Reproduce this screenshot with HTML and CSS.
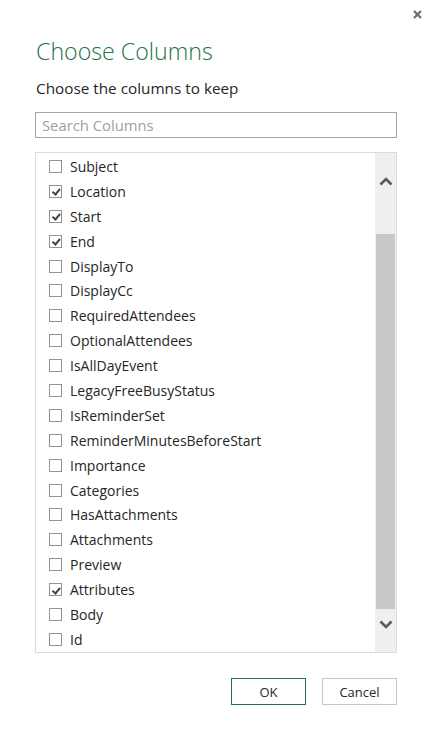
FILE: index.html
```html
<!DOCTYPE html>
<html>
<head>
<meta charset="utf-8">
<link rel="stylesheet" href="styles.css">
</head>
<body>
<div class="dialog">
  <button class="close" aria-label="Close">
    <svg width="9" height="9" viewBox="0 0 9 9"><path d="M1 1 L8 8 M8 1 L1 8" stroke="#6b6b6b" stroke-width="2.2" fill="none"/></svg>
  </button>
  <h1 class="title">Choose Columns</h1>
  <p class="subtitle">Choose the columns to keep</p>
  <div class="search"><span class="placeholder">Search Columns</span></div>
  <div class="listbox">
    <ul class="items">
      <li class="item"><span class="cb"></span>Subject</li>
      <li class="item"><span class="cb checked"></span>Location</li>
      <li class="item"><span class="cb checked"></span>Start</li>
      <li class="item"><span class="cb checked"></span>End</li>
      <li class="item"><span class="cb"></span>DisplayTo</li>
      <li class="item"><span class="cb"></span>DisplayCc</li>
      <li class="item"><span class="cb"></span>RequiredAttendees</li>
      <li class="item"><span class="cb"></span>OptionalAttendees</li>
      <li class="item"><span class="cb"></span>IsAllDayEvent</li>
      <li class="item"><span class="cb"></span>LegacyFreeBusyStatus</li>
      <li class="item"><span class="cb"></span>IsReminderSet</li>
      <li class="item"><span class="cb"></span>ReminderMinutesBeforeStart</li>
      <li class="item"><span class="cb"></span>Importance</li>
      <li class="item"><span class="cb"></span>Categories</li>
      <li class="item"><span class="cb"></span>HasAttachments</li>
      <li class="item"><span class="cb"></span>Attachments</li>
      <li class="item"><span class="cb"></span>Preview</li>
      <li class="item"><span class="cb checked"></span>Attributes</li>
      <li class="item"><span class="cb"></span>Body</li>
      <li class="item"><span class="cb"></span>Id</li>
    </ul>
    <div class="scrollbar">
      <div class="arrow up"><svg width="14" height="9" viewBox="0 0 14 9"><path d="M1.5 7.5 L7 2 L12.5 7.5" stroke="#5a5a5a" stroke-width="2.6" fill="none"/></svg></div>
      <div class="track"><div class="thumb"></div></div>
      <div class="arrow down"><svg width="14" height="9" viewBox="0 0 14 9"><path d="M1.5 1.5 L7 7 L12.5 1.5" stroke="#5a5a5a" stroke-width="2.6" fill="none"/></svg></div>
    </div>
  </div>
  <div class="buttons">
    <button class="btn ok">OK</button>
    <button class="btn cancel">Cancel</button>
  </div>
</div>
</body>
</html>
```

FILE: styles.css
```css
html, body {
  margin: 0;
  padding: 0;
  background: #ffffff;
}
body {
  font-family: "Open Sans", "Noto Sans", sans-serif;
  color: #262626;
}
.dialog {
  position: relative;
  width: 432px;
  height: 742px;
  box-sizing: border-box;
  padding: 34px 35px 0 35px;
}
.close {
  position: absolute;
  top: 8px;
  right: 9px;
  width: 12px;
  height: 12px;
  padding: 0;
  border: 0;
  background: none;
  display: flex;
  align-items: center;
  justify-content: center;
}
.title {
  margin: 0 0 0 1px;
  font-weight: 300;
  font-size: 23.2px;
  line-height: 34px;
  color: #217346;
}
.subtitle {
  margin: 10px 0 0 1px;
  font-size: 15.3px;
  line-height: 20px;
  color: #262626;
}
.search {
  margin-top: 14px;
  height: 26px;
  box-sizing: border-box;
  border: 1px solid #a6a6a6;
  display: flex;
  align-items: center;
  padding-left: 6px;
}
.placeholder {
  font-size: 14.8px;
  color: #a0a0a0;
}
.listbox {
  margin-top: 14px;
  height: 501px;
  box-sizing: border-box;
  border: 1px solid #dcdcdc;
  display: flex;
}
.items {
  list-style: none;
  margin: 0;
  padding: 1px 0 0 13px;
  flex: 1;
  overflow: hidden;
}
.item {
  height: 24.9px;
  display: flex;
  align-items: center;
  font-size: 14px;
  color: #262626;
}
.cb {
  width: 13px;
  height: 13px;
  box-sizing: border-box;
  border: 1px solid #929292;
  margin-right: 8px;
  position: relative;
  flex: none;
}
.cb.checked::after {
  content: "";
  position: absolute;
  left: 3.5px;
  top: 1.5px;
  width: 2.5px;
  height: 5.5px;
  border-right: 2px solid #444444;
  border-bottom: 2px solid #444444;
  transform: rotate(40deg);
}
.scrollbar {
  width: 21px;
  background: #efefef;
  display: flex;
  flex-direction: column;
}
.arrow {
  display: flex;
  align-items: center;
  justify-content: center;
}
.arrow.up {
  height: 56px;
}
.arrow.down {
  height: 43px;
  align-items: flex-start;
  padding-top: 11px;
  box-sizing: border-box;
}
.track {
  flex: 1;
  display: flex;
  padding: 25px 1px 0 1px;
}
.thumb {
  flex: 1;
  background: #c8c8c8;
}
.buttons {
  margin-top: 25px;
  display: flex;
  justify-content: flex-end;
  gap: 16px;
}
.btn {
  width: 75px;
  height: 27px;
  box-sizing: border-box;
  background: #ffffff;
  font-family: "Open Sans", "Noto Sans", sans-serif;
  font-size: 13px;
  color: #262626;
  padding: 0;
}
.btn.ok {
  border: 1px solid #217346;
}
.btn.cancel {
  border: 1px solid #c6c6c6;
}
```
